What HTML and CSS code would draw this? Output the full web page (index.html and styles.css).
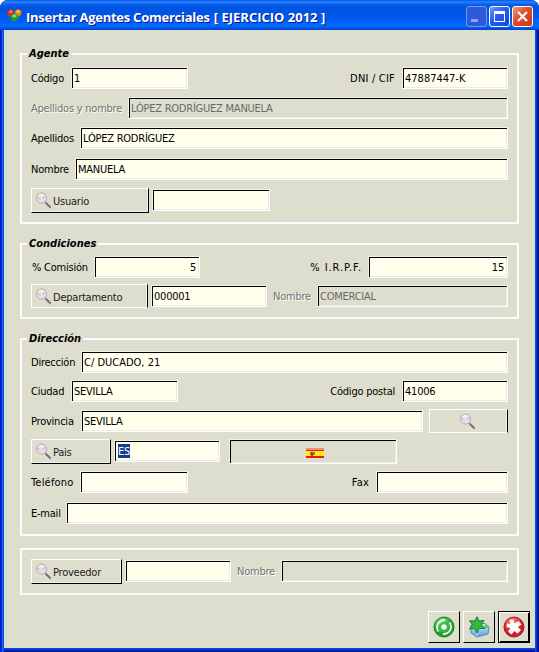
FILE: index.html
```html
<!DOCTYPE html>
<html lang="es">
<head>
<meta charset="utf-8">
<title>Insertar Agentes Comerciales</title>
<link rel="stylesheet" href="styles.css">
</head>
<body>
<svg class="defs" width="0" height="0" aria-hidden="true">
  <defs>
    <symbol id="lens" viewBox="0 0 18 18">
      <path d="M10.5 10.5 L15.5 15.5" stroke="#77717a" stroke-width="2"/>
      <path d="M10.3 10 L11.5 11.2 M14.7 15.2 L15.5 16" stroke="#bd68c8" stroke-width="1.5"/>
      <circle cx="6.5" cy="6" r="5" fill="#e9e5e5" stroke="#b9a7b5"/>
      <path d="M2.5 5 L5.5 8 M7.5 7 L10.5 4" stroke="#dfb9df" stroke-width="1.5"/>
      <path d="M4 3.5 Q6.5 1.8 8.5 3.5" stroke="#fff" fill="none"/>
    </symbol>
    <radialGradient id="green" cx=".4" cy=".3"><stop offset="0" stop-color="#8be688"/><stop offset="1" stop-color="#1f9f31"/></radialGradient>
    <radialGradient id="red" cx=".4" cy=".25"><stop offset="0" stop-color="#ff8b8b"/><stop offset="1" stop-color="#d61d2a"/></radialGradient>
    <linearGradient id="blue" x2="0" y2="1"><stop stop-color="#d5ebff"/><stop offset="1" stop-color="#5c9be0"/></linearGradient>
  </defs>
</svg>
<div class="window">
  <header class="titlebar">
    <svg class="logo" width="16" height="16" viewBox="0 0 16 16">
      <path d="M0 4 L4 1 L7 3 L7 7 L4 9 L1 8Z" fill="#dc2c20"/><path d="M1.500 4 L4 2 L6 4 L4 5Z" fill="#ff8474"/>
      <path d="M8 3 L11 1 L14.500 3 L14 7 L11 9 L8 7Z" fill="#e88712"/><path d="M9 3.500 L11 2 L13 3.500 L11 5Z" fill="#ffce58"/>
      <path d="M3 8 L7.500 5 L11.500 8 L11 11 L7.500 14 L4 12Z" fill="#23962c"/><path d="M4.500 8 L7.500 6 L10 8 L7.500 10Z" fill="#6be866"/>
    </svg>
    <h1>Insertar Agentes Comerciales <span>[ EJERCICIO 2012 ]</span></h1>
    <div class="controls">
      <span class="ctl min"><i></i></span><span class="ctl max"><i></i></span>
      <span class="ctl close"><svg width="19" height="19" viewBox="0 0 19 19"><path d="M5 5 L14 14 M14 5 L5 14" stroke="#fff" stroke-width="2.2"/></svg></span>
    </div>
  </header>
  <main class="client">
    <section class="group agente">
      <h2>Agente</h2>
      <div class="row r1"><label class="w40">Código</label><div class="field f117">1</div><label class="end wide">DNI / CIF</label><div class="field f106 digits">47887447-K</div></div>
      <div class="row r2"><label class="w97 off">Apellidos y nombre</label><div class="field grow off">LÓPEZ RODRÍGUEZ MANUELA</div></div>
      <div class="row r3"><label class="w49">Apellidos</label><div class="field grow">LÓPEZ RODRÍGUEZ</div></div>
      <div class="row r4"><label class="w44">Nombre</label><div class="field grow">MANUELA</div></div>
      <div class="row r5"><div class="btn b118"><svg class="lens"><use href="#lens"/></svg><span>Usuario</span></div><div class="field f118 gap"></div></div>
    </section>
    <section class="group condiciones">
      <h2>Condiciones</h2>
      <div class="row r1"><label class="w63 pct">% Comisión</label><div class="field f106 num">5</div><label class="end irpf">% I.R.P.F.</label><div class="field f140 num">15</div></div>
      <div class="row r2"><div class="btn flat b117"><svg class="lens"><use href="#lens"/></svg><span>Departamento</span></div><div class="field f116 gap">000001</div><label class="name off">Nombre</label><div class="field grow off">COMERCIAL</div></div>
    </section>
    <section class="group direccion">
      <h2>Dirección</h2>
      <div class="row r1"><label class="w50">Dirección</label><div class="field grow digits">C/ DUCADO, 21</div></div>
      <div class="row r2"><label class="w40">Ciudad</label><div class="field f107">SEVILLA</div><label class="end">Código postal</label><div class="field f106">41006</div></div>
      <div class="row r3"><label class="w50">Provincia</label><div class="field grow">SEVILLA</div><div class="btn flat find"><svg class="lens"><use href="#lens"/></svg></div></div>
      <div class="row r4"><div class="btn b80"><svg class="lens"><use href="#lens"/></svg><span>Pais</span></div><div class="field f106 gap"><mark>ES</mark></div>
        <div class="flagbox"><svg width="18" height="10" viewBox="0 0 18 10"><path fill="#e51a14" d="M0 0h18v10H0z"/><path fill="#f58c80" d="M0 0h18v2H0z"/><path fill="#ffee13" d="M0 3h18v5H0z"/><path fill="#a8711d" d="M4 4h5v3H4z"/><path fill="#bd3a14" d="M5 4h2v4H5z"/></svg></div></div>
      <div class="row r5"><label class="w49 wide">Teléfono</label><div class="field f108"></div><label class="end wide">Fax</label><div class="field f132"></div></div>
      <div class="row r6"><label class="w35">E-mail</label><div class="field grow"></div></div>
    </section>
    <section class="group proveedor">
      <div class="row r1"><div class="btn b91"><svg class="lens"><use href="#lens"/></svg><span>Proveedor</span></div><div class="field f106 gap"></div><label class="name off">Nombre</label><div class="field grow off"></div></div>
    </section>
    <footer class="actions">
      <div class="tool"><svg width="22" height="22" viewBox="0 0 22 22"><circle cx="11" cy="11" r="10" fill="url(#green)" stroke="#188225"/><circle cx="11" cy="11" r="7" fill="none" stroke="#e7fbe4" stroke-width="1.800" stroke-dasharray="17 5" stroke-dashoffset="5"/><ellipse cx="11" cy="11" rx="6" ry="4.500" fill="#3eb545" transform="rotate(-35 11 11)"/><circle cx="11" cy="11" r="2.700" fill="#fff"/></svg></div>
      <div class="tool"><svg width="22" height="22" viewBox="0 0 22 22"><path d="M3 9 L17 7.500 L21 11 L20 18 L9 21 L3 17Z" fill="url(#blue)" stroke="#4f88c6"/><path d="M9 14 L20 11.500 M9 14 V20" stroke="#d8ebff" fill="none"/><circle cx="18" cy="11" r="1.800" fill="#2bdc20"/><path d="M9 .8 L11 5 L16 4.500 L13.300 8.500 L16.500 12.500 L11.200 12.500 L9 17 L6.600 12.600 L1.500 13 L4.500 8.800 L1.500 4.800 L7 5Z" fill="#35b83d" stroke="#17812a"/></svg></div>
      <div class="tool default"><svg width="22" height="22" viewBox="0 0 22 22"><circle cx="11" cy="11" r="10" fill="url(#red)" stroke="#b01520"/><path d="M6.500 4 L10.500 3.500 L11.500 7.500 L15.500 5 L18.500 8.500 L14.800 11 L18 14 L14.500 17.500 L11.300 15 L8.500 18.500 L5 15.500 L7.500 12 L3.500 11 L4 7.500 L7.500 8Z" fill="#fff"/></svg></div>
    </footer>
  </main>
</div>
</body>
</html>
```
FILE: styles.css
```css
* { box-sizing: border-box; }
body { margin: 0; background: #fff; font: 11px/14px "DejaVu Sans Condensed", "DejaVu Sans", sans-serif; letter-spacing: -.23px; color: #000; }
.defs { display: block; }
.window { width: 539px; height: 652px; border-radius: 8px 8px 0 0; overflow: hidden; background: linear-gradient(90deg, #0019cf 0 1px, #0831d9 1px 2px, #166aee 2px 3px, #0855dd 3px 4px, transparent 4px 535px, #0850e3 535px 536px, #0036d5 536px 537px, #001590 537px), linear-gradient(#0046e0 0 649px, #003fdc 649px 650px, #0020b0 650px 651px, #00138c 651px); display: flex; flex-direction: column; }
.titlebar { height: 30px; flex: none; display: flex; align-items: center; padding: 2px 6px 0 7px; background: linear-gradient(#0058e6 0, #2b83ff 2px, #0b63f0 4px, #0054e0 7px, #0055e5 14px, #005cf5 20px, #026afe 25px, #0062f8 27px, #0040cc 30px); }
.logo { flex: none; margin-top: -1px; }
h1 { margin: 1px 0 0 3px; font: bold 13px/18px "Open Sans", sans-serif; letter-spacing: -.25px; color: #fff; text-shadow: 1px 1px #0a1883; white-space: nowrap; }
h1 span { letter-spacing: 0; margin-left: 1px; }
.controls { margin-left: auto; display: flex; gap: 2px; }
.ctl { width: 21px; height: 21px; border: 1px solid #fff; border-radius: 3px; background: linear-gradient(135deg, #6c9cff, #245ded 45%, #1248da); }
.ctl i { display: block; }
.min { border-color: #7297ee; background: #2b5bd9; }
.min i { width: 7px; height: 3px; margin: 12px 0 0 4px; background: #8ba6ee; }
.max i { width: 11px; height: 11px; margin: 4px; border: 1px solid #fff; border-top-width: 3px; }
.close { background: linear-gradient(135deg, #f09a80, #e0492a 45%, #c93a12); }
.close svg { display: block; }
.client { flex: none; width: 531px; height: 618px; margin-left: 4px; padding: 23px 16px 0; background: #dddecd; }
.group { width: 499px; border: 2px solid #fbfbfb; padding: 0 9px; }
.agente { height: 171px; }
.condiciones { height: 76px; margin-top: 19px; }
.direccion { height: 198px; margin-top: 19px; }
.proveedor { height: 47px; margin-top: 12px; }
h2 { width: fit-content; height: 14px; margin: -9px 0 0 -4px; padding: 1px 2px 0; background: #dddecd; font: italic bold 11px/14px "DejaVu Sans Condensed", sans-serif; letter-spacing: 0; }
.row { display: flex; align-items: flex-start; height: 22px; }
label { flex: none; height: 22px; line-height: 24px; white-space: nowrap; }
.field { flex: none; height: 22px; border: 1px solid; border-color: #f1f1eb #fff #fff #f1f1eb; background: #ffffec; box-shadow: inset 1px 1px #000, inset -1px -1px #ebebe8; padding: 0 3px 0 2px; line-height: 22px; white-space: nowrap; }
.grow { flex: 1; }
.field.off { background: #dddecd; color: #696969; }
label.off { color: #73736d; text-shadow: 1px 1px #fff; }
.digits { letter-spacing: 0; }
.num { text-align: right; }
.end { margin-left: auto; padding-right: 7px; }
.wide { letter-spacing: .2px; }
.irpf { letter-spacing: .9px; padding-right: 6px; }
.gap { margin: 1px 0 0 3px; }
.name { width: 50px; padding-left: 6px; margin-top: 1px; }
.name + .field { margin-top: 1px; }
.pct { padding-left: 1px; }
.agente .r1 { margin-top: 7px; }
.agente .r2, .agente .r3 { margin-top: 8px; }
.agente .r4 { margin-top: 9px; }
.agente .r5 { margin-top: 8px; }
.condiciones .r1, .condiciones .r2 { margin-top: 6px; }
.direccion .r1 { margin-top: 6px; }
.direccion .r2 { margin-top: 7px; }
.direccion .r3 { margin-top: 8px; }
.direccion .r4 { margin-top: 7px; }
.direccion .r5 { margin-top: 10px; }
.direccion .r6 { margin-top: 9px; }
.proveedor .r1 { margin-top: 9px; }
.w35 { width: 35px; } .w40 { width: 40px; } .w44 { width: 44px; } .w49 { width: 49px; }
.w50 { width: 50px; } .w63 { width: 63px; } .w97 { width: 97px; }
.f106 { width: 106px; } .f107 { width: 107px; } .f108 { width: 108px; } .f116 { width: 116px; }
.f117 { width: 117px; } .f118 { width: 118px; } .f132 { width: 132px; } .f140 { width: 140px; }
.btn { flex: none; display: flex; height: 25px; border: 1px solid; border-color: #fff #000 #000 #fff; box-shadow: inset -1px -1px #f0f0ec; padding: 3px 0 0 3px; line-height: 19px; color: #202020; }
.btn.flat { height: 24px; border-bottom-color: #fff; box-shadow: inset -1px 0 #f0f0ec; }
.lens { width: 18px; height: 18px; flex: none; }
.b80 { width: 80px; } .b91 { width: 91px; } .b117 { width: 117px; } .b118 { width: 118px; }
.find { width: 79px; margin: -1px 0 0 6px; padding-left: 29px; }
.flagbox { width: 168px; height: 25px; margin-left: 9px; border: 1px solid; border-color: #f1f1eb #fff #fff #f1f1eb; box-shadow: inset 1px 1px #000, inset -1px -1px #ebebe8; padding: 8px 0 0 76px; }
.flagbox svg { display: block; }
mark { display: inline-block; height: 14px; line-height: 15px; margin-left: 1px; background: #173f8c; color: #fff; }
.actions { display: flex; justify-content: flex-end; gap: 3px; margin: 16px -11px 0 0; }
.tool { width: 32px; height: 32px; border: 1px solid; border-color: #fff #000 #000 #fff; padding: 4px; }
.tool svg { display: block; }
.tool.default { border: 1px solid #000; box-shadow: inset 1px 1px #fff, inset -1px -1px #000; }
```
